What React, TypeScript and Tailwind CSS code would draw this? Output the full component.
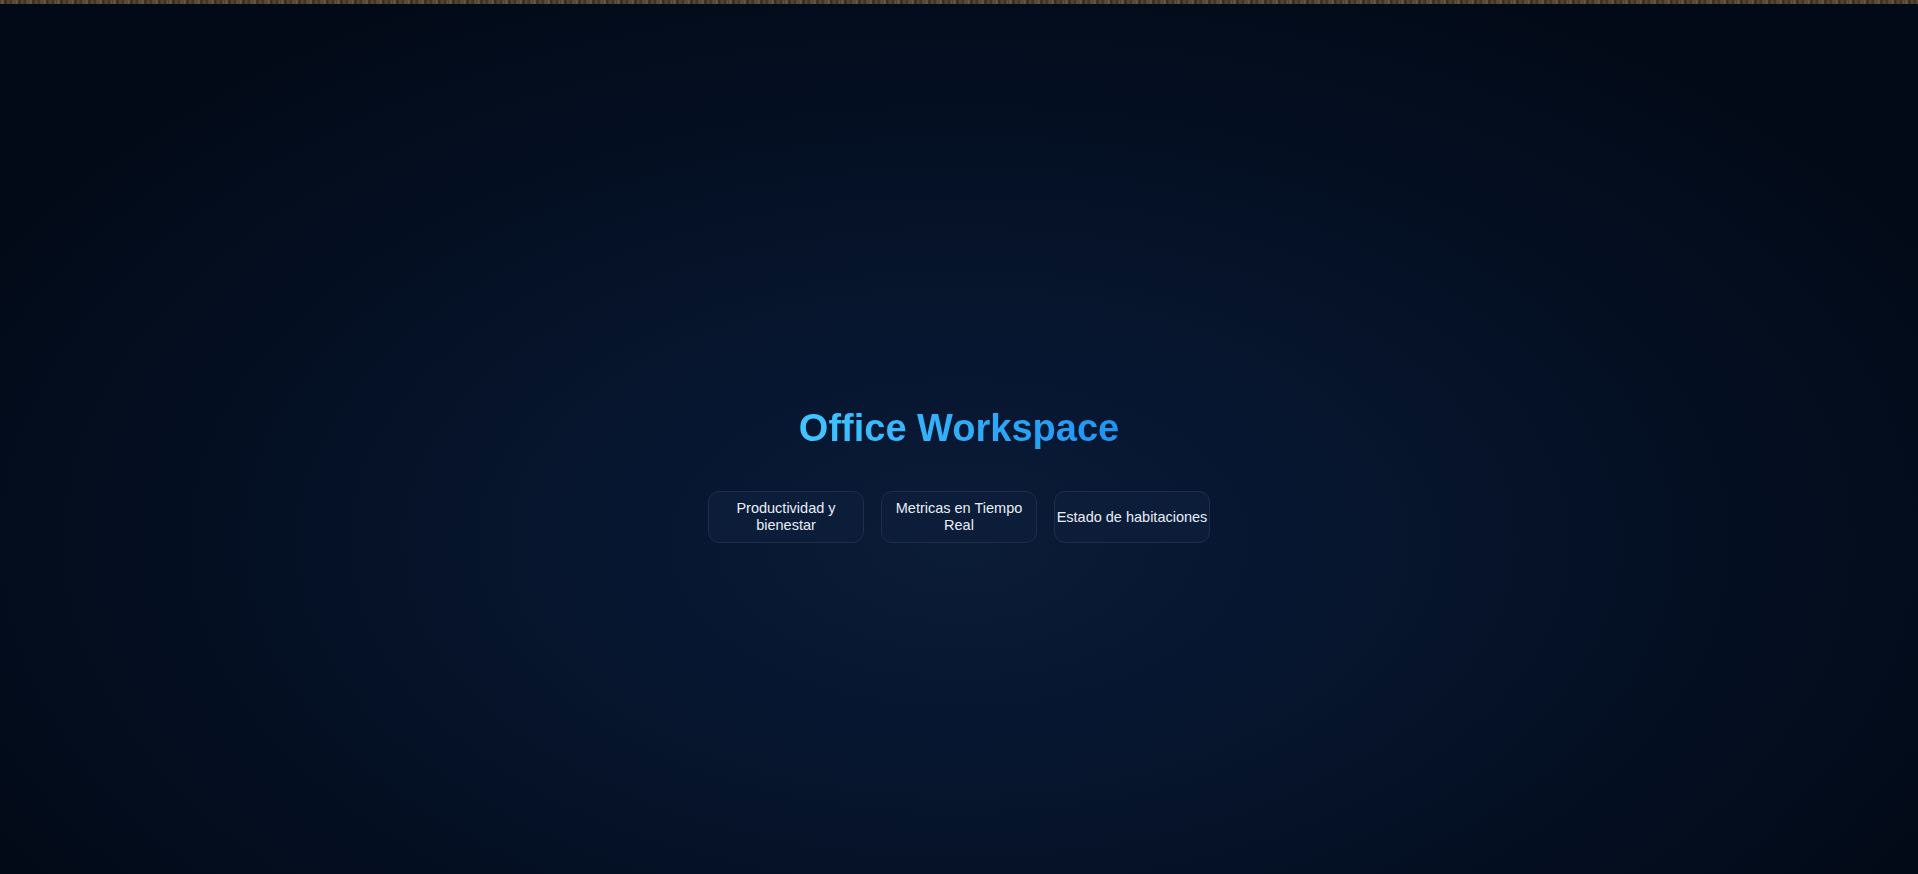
import React from "react";

export default function App() {
  const items = ["Productividad y bienestar", "Metricas en Tiempo Real", "Estado de habitaciones"];
  return (
    <div
      className="w-full h-[874px] overflow-hidden flex flex-col bg-[radial-gradient(ellipse_58%_72%_at_50%_62%,#0b1c36_0%,#071630_30%,#040f22_68%,#020a17_100%)]"
      style={{ fontFamily: '"Liberation Sans", Arial, sans-serif' }}
    >
      <div className="h-[4px] w-full shrink-0 bg-[repeating-linear-gradient(90deg,#4a3f30_0px,#6d5e49_3px,#2e261c_5px,#574a38_8px,#3b3226_11px,#675843_14px)]" />
      <div className="flex flex-col items-center pt-[401px]">
        <h1 className="text-[38px] leading-[46px] font-bold bg-gradient-to-r from-[#42c6ff] to-[#1f93f5] bg-clip-text text-transparent">
          Office Workspace
        </h1>
        <div className="mt-[40px] flex gap-[17px]">
          {items.map((t) => (
            <div
              key={t}
              className="w-[156px] h-[52px] flex items-center justify-center text-center px-0 rounded-[11px] border border-[#1d2d4a] bg-[#0c1d39] text-[#e8eef8] text-[14.5px] leading-[17px]"
            >
              {t}
            </div>
          ))}
        </div>
      </div>
    </div>
  );
}
